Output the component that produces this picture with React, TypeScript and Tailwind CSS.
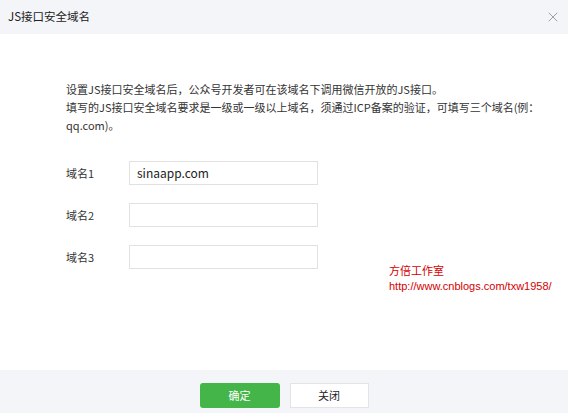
import { X } from "lucide-react";

export default function App() {
  const fields = [
    { label: "域名1", value: "sinaapp.com" },
    { label: "域名2", value: "" },
    { label: "域名3", value: "" },
  ];

  return (
    <div
      className="w-[568px] h-[413px] bg-white flex flex-col text-[#222]"
      style={{ fontFamily: '"Noto Sans CJK SC", "Liberation Sans", sans-serif' }}
    >
      <div className="h-[34px] shrink-0 bg-[#f4f5f9] flex items-center justify-between pl-[8px] pr-[7px]">
        <span className="text-[11.5px] text-[#222]">JS接口安全域名</span>
        <X size={16} strokeWidth={1.5} className="text-[#a0a0a0]" />
      </div>

      <div className="flex-1 relative pl-[66px] pt-[46px]">
        <div className="text-[11px] leading-[18px] text-[#333] whitespace-nowrap">
          <p>设置JS接口安全域名后，公众号开发者可在该域名下调用微信开放的JS接口。</p>
          <p>
            填写的JS接口安全域名要求是一级或一级以上域名，须通过ICP备案的验证，可填写三个域名(例：
            <br />
            qq.com)。
          </p>
        </div>

        <div className="mt-[27px] flex flex-col gap-[18px]">
          {fields.map((f) => (
            <div key={f.label} className="flex items-center">
              <span className="w-[63px] text-[11px] text-[#333]">{f.label}</span>
              <div className="w-[189px] h-[24px] border border-[#e1e1e1] flex items-center px-[7px] text-[12px] text-[#222]">
                {f.value}
              </div>
            </div>
          ))}
        </div>

        <div className="absolute left-[389px] top-[228px] text-[11px] leading-[16px] text-[#d40000]">
          <p>方倍工作室</p>
          <p style={{ fontFamily: '"Liberation Sans", sans-serif' }}>http://www.cnblogs.com/txw1958/</p>
        </div>
      </div>

      <div className="h-[43px] shrink-0 bg-[#f4f5f9] flex justify-center items-start pt-[13px] gap-[10px]">
        <button className="w-[80px] h-[25px] rounded-[3px] bg-[#44b549] text-white text-[11px]">确定</button>
        <button className="w-[79px] h-[25px] bg-white border border-[#e4e4e4] text-[11px] text-[#222]">关闭</button>
      </div>
    </div>
  );
}
